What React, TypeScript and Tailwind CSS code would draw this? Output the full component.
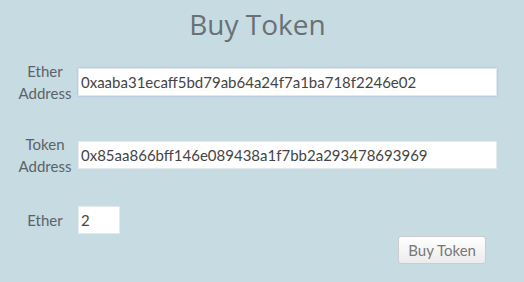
import React from 'react';

const labelCls = 'w-[60px] text-center text-[15px] leading-[22px] text-[#5c6368]';
const inputCls =
  'h-[28px] bg-white px-[2px] text-[15px] text-[#444] outline-none border border-[#e3e9ec]';

const App = () => {
  return (
    <div className="w-[524px] h-[282px] bg-[#c6dbe2] font-['Lato','Open_Sans',sans-serif] overflow-hidden">
      {/* title */}
      <h1 className="text-center text-[28px] leading-[38px] pt-[5px] pr-[9px] text-[#6a7175] font-['Open_Sans',sans-serif]">
        Buy Token
      </h1>

      <div className="flex flex-col pl-[15px] pr-[27px] mt-[17px]">
        {/* ether address */}
        <div className="flex items-center gap-x-[3px]">
          <p className={labelCls}>
            Ether
            <br />
            Address
          </p>
          <input
            className={`${inputCls} flex-1 border-[#9fb7dd] shadow-[0_0_2px_#9fb7dd]`}
            defaultValue="0xaaba31ecaff5bd79ab64a24f7a1ba718f2246e02"
          />
        </div>

        {/* token address */}
        <div className="flex items-center gap-x-[3px] mt-[29px]">
          <p className={labelCls}>
            Token
            <br />
            Address
          </p>
          <input
            className={`${inputCls} flex-1`}
            defaultValue="0x85aa866bff146e089438a1f7bb2a293478693969"
          />
        </div>

        {/* ether amount */}
        <div className="flex items-center gap-x-[3px] mt-[29px]">
          <p className={labelCls}>Ether</p>
          <input className={`${inputCls} w-[42px]`} defaultValue="2" />
        </div>

        {/* submit */}
        <div className="flex justify-end pr-[11px] mt-[2px]">
          <button className="h-[28px] px-[9px] text-[15px] text-[#777] border border-[#ccc] rounded-[3px] bg-gradient-to-b from-white to-[#ececec]">
            Buy Token
          </button>
        </div>
      </div>
    </div>
  );
};

export default App;
